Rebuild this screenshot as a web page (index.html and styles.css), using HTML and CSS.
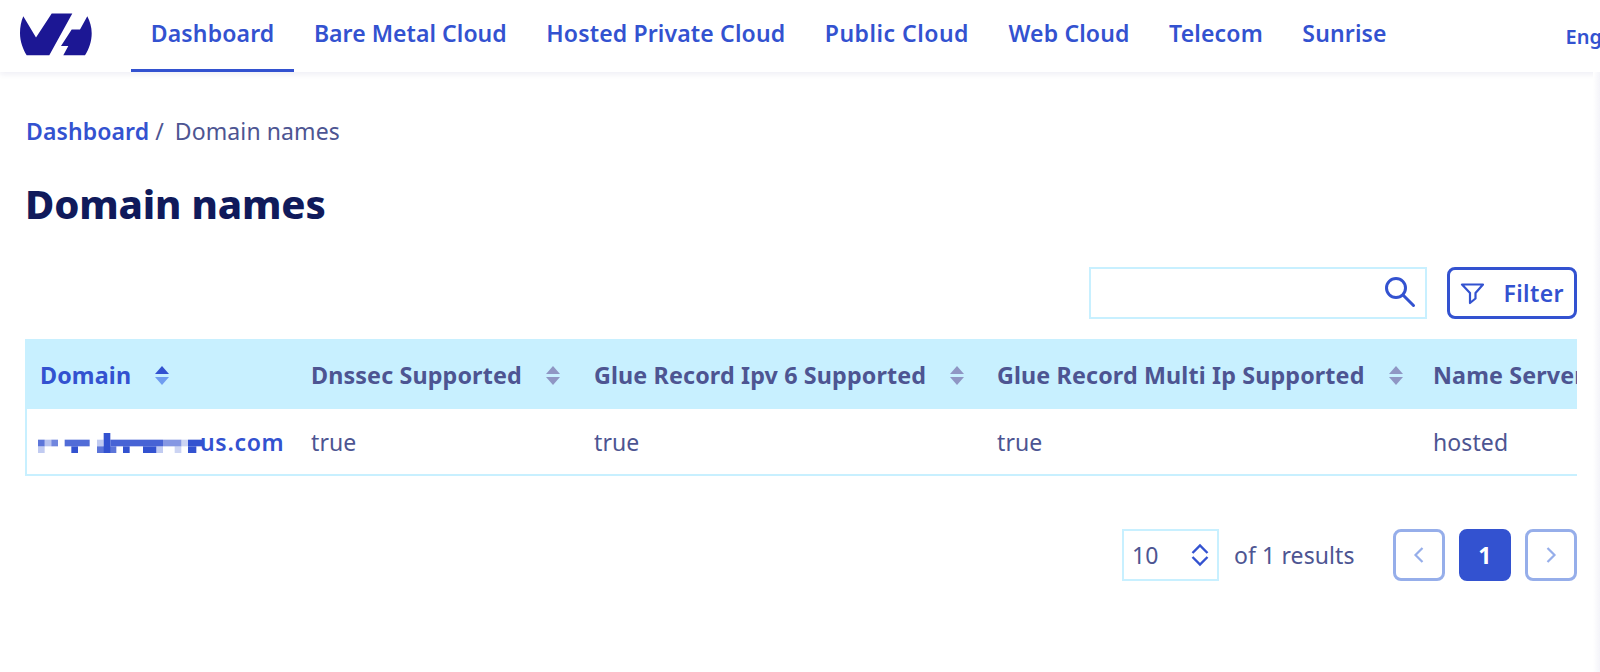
FILE: index.html
```html
<!DOCTYPE html>
<html lang="en">
<head>
<meta charset="utf-8">
<title>Domain names</title>
<link rel="stylesheet" href="styles.css">
</head>
<body>
<header class="topbar">
  <svg class="logo" viewBox="20 13 72 42.500" width="72" height="43" aria-label="OVH logo"><path d="M23.300 16 C21 21 20 27 20 33 C20 41 23 49 26.700 55 H49.300 L72.300 13.300 H51.700 L36 37.300 Z M87.300 16 L80 29.300 H71.700 L61 45.700 H68.300 L63.300 55 H85 C89 49 91.700 41 91.700 33 C91.700 27 90 21 87.300 16 Z"/></svg>
  <nav class="nav">
    <a class="nav-item active">Dashboard</a>
    <a class="nav-item tight">Bare Metal Cloud</a>
    <a class="nav-item">Hosted Private Cloud</a>
    <a class="nav-item wide">Public Cloud</a>
    <a class="nav-item">Web Cloud</a>
    <a class="nav-item">Telecom</a>
    <a class="nav-item">Sunrise</a>
  </nav>
  <span class="lang">English</span>
</header>
<main class="content">
  <div class="crumbs"><a>Dashboard</a><span class="sep">/</span><span>Domain names</span></div>
  <h1>Domain names</h1>
  <div class="tools">
    <div class="search">
      <svg viewBox="0 0 34 34" width="34" height="34"><circle cx="13" cy="13" r="9.500"/><path d="M20 20 L30.500 30.500"/></svg>
    </div>
    <button class="filter">
      <svg viewBox="0 0 24 24" width="24" height="24"><path d="M2 3.500 H23 L15.500 12 V17.500 L10 22 V12 Z"/></svg>
      <span>Filter</span>
    </button>
  </div>
  <div class="table">
    <div class="row head">
      <div class="cell c1 cur">Domain<i class="sort on"></i></div>
      <div class="cell">Dnssec Supported<i class="sort"></i></div>
      <div class="cell">Glue Record Ipv 6 Supported<i class="sort"></i></div>
      <div class="cell">Glue Record Multi Ip Supported<i class="sort"></i></div>
      <div class="cell">Name Server Type</div>
    </div>
    <div class="row body">
      <div class="cell c1"><a class="domain"><svg class="mosaic" viewBox="115 302 498 60" width="166" height="20" aria-hidden="true"><rect x="115" y="322" width="20" height="20" opacity=".8"/><rect x="135" y="322" width="20" height="20" opacity=".35"/><rect x="155" y="322" width="20" height="20" opacity=".7"/><rect x="115" y="342" width="20" height="20" opacity=".3"/><rect x="195" y="322" width="75" height="20" opacity=".85"/><rect x="215" y="342" width="20" height="20"/><rect x="292" y="322" width="20" height="20" opacity=".3"/><rect x="312" y="302" width="20" height="60"/><rect x="332" y="322" width="158" height="20" opacity=".9"/><rect x="292" y="342" width="58" height="20" opacity=".8"/><rect x="370" y="342" width="20" height="20"/><rect x="430" y="342" width="40" height="20"/><rect x="470" y="342" width="20" height="20" opacity=".3"/><rect x="490" y="322" width="55" height="20" opacity=".6"/><rect x="525" y="342" width="20" height="20" opacity=".25"/><rect x="545" y="322" width="20" height="20" opacity=".25"/><rect x="565" y="322" width="48" height="20"/><rect x="565" y="342" width="25" height="20"/></svg><span class="tld">us.com</span></a></div>
      <div class="cell">true</div>
      <div class="cell">true</div>
      <div class="cell">true</div>
      <div class="cell">hosted</div>
    </div>
  </div>
  <div class="pager">
    <div class="size"><span>10</span><svg viewBox="0 0 18 24" width="18" height="24"><path d="M1.500 10 L9 2.500 L16.500 10 M1.500 14 L9 21.500 L16.500 14"/></svg></div>
    <span class="count">of 1 results</span>
    <div class="pages">
      <div class="page"><svg viewBox="0 0 12 18" width="12" height="18"><path d="M9.500 2 L2.500 9 L9.500 16"/></svg></div>
      <div class="page current">1</div>
      <div class="page"><svg viewBox="0 0 12 18" width="12" height="18"><path d="M2.500 2 L9.500 9 L2.500 16"/></svg></div>
    </div>
  </div>
</main>
</body>
</html>
```
FILE: styles.css
```css
* { box-sizing: border-box; }
html, body { margin: 0; height: 100%; overflow: hidden; background: #fff; }
body { font-family: "Noto Sans", "Open Sans", sans-serif; color: #4d5592; font-size: 23px; letter-spacing: .1px; width: 1600px; }
body::after { content: ""; position: fixed; top: 72px; right: 0; bottom: 0; width: 7px; background: linear-gradient(to right, #fff, #f4f4f9); }
a { color: #3352d0; text-decoration: none; }
.topbar { height: 72px; display: flex; align-items: stretch; background: #fff; box-shadow: 0 2px 6px rgba(20,30,110,.08); padding-left: 20px; white-space: nowrap; overflow: hidden; }
.logo { fill: #1c1794; align-self: flex-start; margin-top: 13px; flex: none; }
.nav { display: flex; margin-left: 39px; }
.nav-item { padding: 0 19.750px; display: flex; align-items: center; font-weight: 600; font-size: 23px; letter-spacing: .15px; height: 72px; padding-bottom: 4px; border-bottom: 3px solid transparent; }
.nav-item.active { border-bottom-color: #3352d0; }
.nav-item.tight { letter-spacing: .05px; }
.nav-item.wide { letter-spacing: .5px; }
.lang { margin-left: 159px; color: #3352d0; font-weight: 600; font-size: 20px; align-self: center; }
.content { padding: 0 23px 0 25px; }
.crumbs { margin-top: 44px; height: 30px; line-height: 30px; display: flex; margin-left: 1px; }
.crumbs a { font-weight: 600; }
.sep { margin: 0 11px 0 6px; }
h1 { margin: 30px 0 0; font-size: 40px; line-height: 56px; font-weight: 800; color: #101a5b; letter-spacing: -.15px; }
.tools { display: flex; justify-content: flex-end; align-items: center; gap: 20px; margin-top: 35px; height: 52px; }
.search { width: 338px; height: 52px; border: 2px solid #c8f0ff; display: flex; align-items: center; justify-content: flex-end; padding-right: 8px; }
.search svg { fill: none; stroke: #3352d0; stroke-width: 3; stroke-linecap: round; margin-top: -2px; }
.filter { width: 130px; height: 52px; border: 3px solid #3352d0; border-radius: 8px; background: #fff; color: #3352d0; font: 600 23px "Noto Sans", sans-serif; letter-spacing: .4px; display: flex; align-items: center; justify-content: space-between; padding: 0 10px 0 10px; }
.filter svg { fill: none; stroke: #3352d0; stroke-width: 2.200; stroke-linejoin: round; }
.table { margin-top: 20px; overflow: hidden; }
.row { display: grid; grid-template-columns: 286px 283px 403px 436px 150px; white-space: nowrap; }
.head { height: 70px; padding-top: 1px; background: #c8f0ff; font-weight: 700; font-size: 23.300px; letter-spacing: .13px; }
.body { height: 67px; padding-bottom: 2px; box-shadow: inset 2px 0 #c8f0ff, inset 0 -2px #c8f0ff; }
.cell { display: flex; align-items: center; overflow: hidden; }
.head .c1 { padding-left: 15px; }
.body .c1 { padding-left: 13px; }
.head .cur { color: #3352d0; }
.sort { width: 14px; height: 20px; margin-left: 24px; margin-top: 3px; flex: none; position: relative; display: block; }
.sort::before, .sort::after { content: ""; position: absolute; left: 0; border: 7px solid transparent; border-top: 0; border-bottom: 8px solid #8f96c4; }
.sort::before { top: 0; }
.sort::after { top: 11px; transform: scaleY(-1); }
.sort.on::before { border-bottom-color: #3352d0; }
.sort.on::after { border-bottom-color: #6f9df0; }
.domain { display: flex; align-items: center; font-weight: 600; }
.mosaic { display: block; fill: #3352d0; flex: none; margin-top: 2px; margin-right: -4px; position: relative; z-index: 1; }
.tld { letter-spacing: .7px; }
.pager { display: flex; justify-content: flex-end; align-items: center; margin-top: 53px; height: 52px; }
.size { width: 97px; height: 52px; border: 2px solid #c8f0ff; display: flex; align-items: center; justify-content: space-between; padding: 0 8px; }
.size svg { fill: none; stroke: #3352d0; stroke-width: 2.400; }
.count { margin-left: 15px; width: 120px; white-space: nowrap; }
.pages { display: flex; gap: 14px; margin-left: 39px; }
.page { width: 52px; height: 52px; border: 3px solid #96aeea; border-radius: 8px; display: flex; align-items: center; justify-content: center; }
.page svg { fill: none; stroke: #96aeea; stroke-width: 2.200; }
.page.current { background: #3352d0; border-color: #3352d0; color: #fff; font-weight: 700; }
```
